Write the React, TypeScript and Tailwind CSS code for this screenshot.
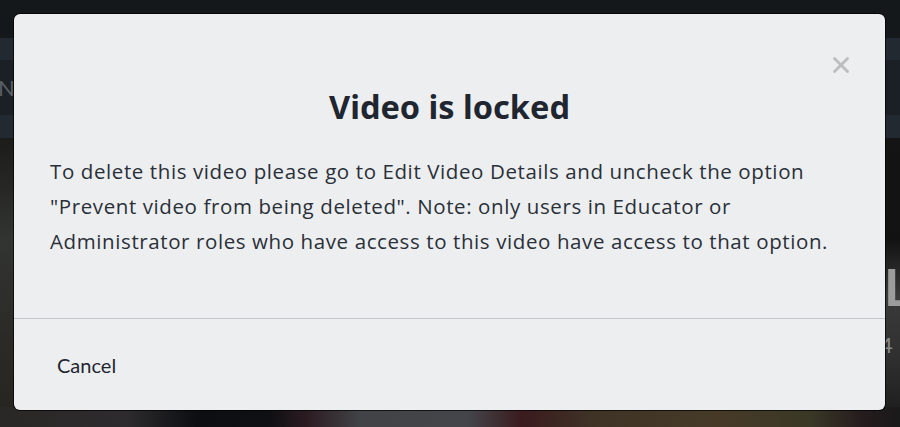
import { X } from "lucide-react";

const App = () => {
  return (
    <div className="relative w-[900px] h-[427px] overflow-hidden bg-[#16191c] font-['Lato',sans-serif]">
      {/* page behind the dialog */}
      <div className="flex flex-col h-full">
        <div className="h-[38px] bg-[#15181b]" />
        <div className="h-[22px] bg-[#222930]" />
        <div className="h-[55px] bg-[#1b2027] flex items-center">
          <span className="-ml-[2px] text-[22px] text-[#5a5f66]">Na</span>
        </div>
        <div className="h-[23px] bg-[#222930]" />
        <div className="relative flex-1 bg-[linear-gradient(to_bottom,#1c1c1b_0%,#323431_35%,#2b2a27_70%,#25241f_100%)]">
          <div className="absolute right-0 top-0 w-[20px] h-full bg-[linear-gradient(to_bottom,#141414_0%,#121212_35%,#3a3a3a_55%,#303030_75%,#1a1a1a_100%)]" />
          <span className="absolute left-[884px] top-[122px] text-[52px] font-bold leading-none text-[#9c9c9c]">La</span>
          <span className="absolute left-[880px] top-[196px] text-[22px] leading-none text-[#8a8a8a]">4</span>
          <div className="absolute left-0 bottom-0 w-full h-[20px] bg-[linear-gradient(to_right,#2a2825_0%,#2d2b2e_14%,#0c0e11_22%,#0f1013_30%,#2b1b21_34%,#414346_40%,#43454a_52%,#3a1b1e_58%,#3f3326_66%,#463a27_80%,#3a3826_90%,#241b1d_96%,#1a1a1a_100%)]" />
        </div>
      </div>

      {/* dialog */}
      <div className="absolute left-[14px] top-[14px] w-[871px] h-[396px] rounded-[6px] bg-[#edeef0] ring-1 ring-black/70 flex flex-col">
        <button className="absolute right-[31px] top-[38px] text-[#bdbdbd]">
          <X className="w-[26px] h-[26px]" strokeWidth={2.6} />
        </button>

        <div className="pt-[74px] px-[36px]">
          <h2 className="text-center text-[32.5px] leading-[38px] font-bold text-[#1f2630] font-['Noto_Sans',sans-serif]">
            Video is locked
          </h2>
          <p className="mt-[28px] text-[20.5px] leading-[35px] tracking-[0.6px] text-[#2a3038] font-['Open_Sans',sans-serif]">
            To delete this video please go to Edit Video Details and uncheck the option
            <br />
            "Prevent video from being deleted". Note: only users in Educator or
            <br />
            Administrator roles who have access to this video have access to that option.
          </p>
        </div>

        <div className="mt-auto border-t border-[#c4c6ca] h-[92px] flex items-center px-[27px]">
          <button className="px-[16px] py-[6px] text-[20px] text-[#1f2630]">Cancel</button>
        </div>
      </div>
    </div>
  );
};

export default App;
